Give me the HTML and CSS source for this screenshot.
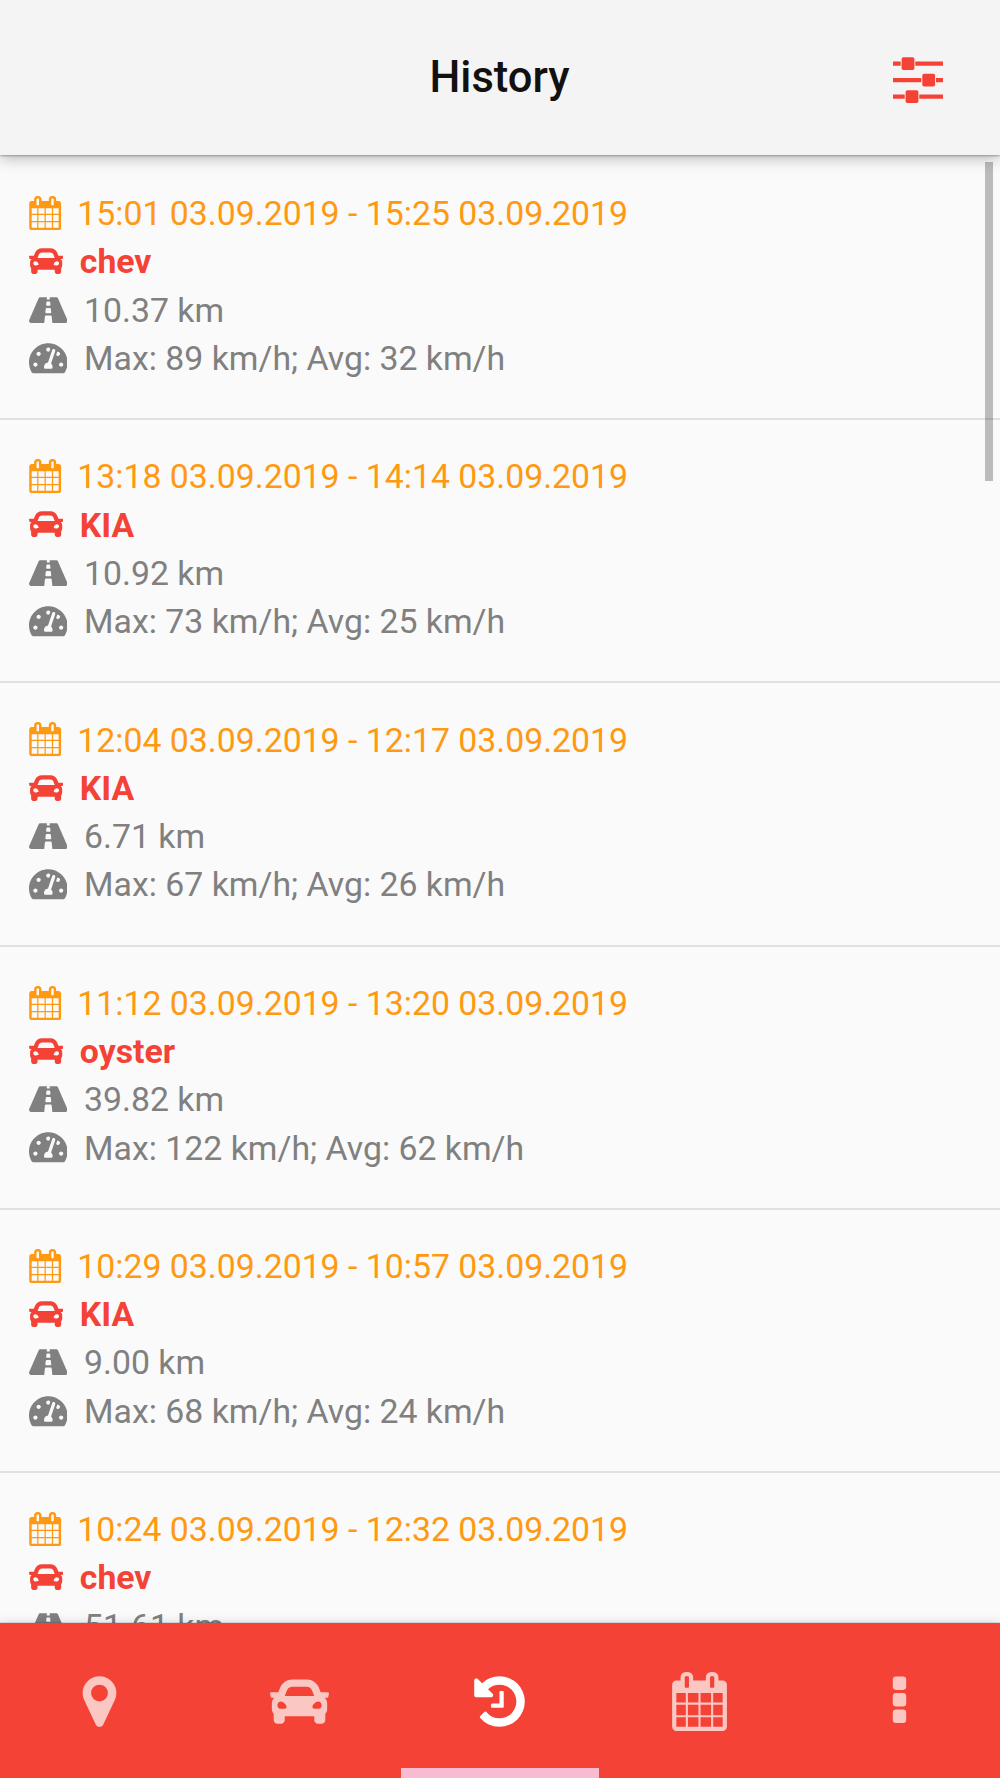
FILE: index.html
```html
<!DOCTYPE html>
<html lang="en">
<head>
  <meta charset="UTF-8">
  <title>History</title>
  <link rel="stylesheet" href="styles.css">
</head>
<body>
  <!-- Icon sprite -->
  <svg class="sprite">
    <symbol id="i-calendar" viewBox="0 0 1792 1792"><path d="M192 1664h288v-288h-288v288zm352 0h320v-288h-320v288zm-352-352h288v-320h-288v320zm352 0h320v-320h-320v320zm-352-384h288v-288h-288v288zm736 736h320v-288h-320v288zm-384-736h320v-288h-320v288zm768 736h288v-288h-288v288zm-384-352h320v-320h-320v320zm-352-864v-288q0-13-9.5-22.5t-22.5-9.5h-64q-13 0-22.5 9.5t-9.5 22.5v288q0 13 9.5 22.5t22.5 9.5h64q13 0 22.5-9.5t9.5-22.5zm736 864h288v-320h-288v320zm-384-384h320v-288h-320v288zm384 0h288v-288h-288v288zm32-480v-288q0-13-9.5-22.5t-22.5-9.5h-64q-13 0-22.5 9.5t-9.5 22.5v288q0 13 9.5 22.5t22.5 9.5h64q13 0 22.5-9.5t9.5-22.5zm384-64v1280q0 52-38 90t-90 38h-1408q-52 0-90-38t-38-90v-1280q0-52 38-90t90-38h128v-96q0-66 47-113t113-47h64q66 0 113 47t47 113v96h384v-96q0-66 47-113t113-47h64q66 0 113 47t47 113v96h128q52 0 90 38t38 90z"/></symbol>
    <symbol id="i-car" viewBox="0 0 512 512"><path d="M499.99 176h-59.87l-16.64-41.6C406.38 91.63 365.57 64 319.5 64h-127c-46.06 0-86.88 27.63-103.99 70.4L71.87 176H12.01C4.2 176-1.53 183.34.37 190.91l6 24C7.7 220.25 12.5 224 18.01 224h20.07C24.65 235.73 16 252.78 16 272v48c0 16.12 6.16 30.67 16 41.93V416c0 17.67 14.33 32 32 32h32c17.67 0 32-14.33 32-32v-32h256v32c0 17.67 14.33 32 32 32h32c17.67 0 32-14.33 32-32v-54.07c9.84-11.25 16-25.8 16-41.93v-48c0-19.22-8.65-36.27-22.07-48H494c5.51 0 10.31-3.75 11.64-9.09l6-24c1.89-7.57-3.84-14.91-11.65-14.91zm-352.06-17.83c7.29-18.22 24.94-30.17 44.57-30.17h127c19.63 0 37.28 11.95 44.57 30.17L384 208H128l19.93-49.83zM96 319.8c-19.2 0-32-12.76-32-31.9S76.8 256 96 256s48 28.71 48 47.85-28.8 15.95-48 15.95zm320 0c-19.2 0-48 3.19-48-15.95S396.8 256 416 256s32 12.76 32 31.9-12.8 31.9-32 31.9z"/></symbol>
    <symbol id="i-road" viewBox="0 0 576 512"><path d="M573.19 402.67l-139.79-320C428.43 71.29 417.6 64 405.68 64h-97.59l2.45 23.16c.5 4.72-3.21 8.84-7.96 8.84h-29.16c-4.75 0-8.46-4.12-7.96-8.84L267.91 64h-97.59c-11.93 0-22.76 7.29-27.73 18.67L2.8 402.67C-6.45 423.86 8.31 448 30.54 448h196.84l10.31-97.68c.86-8.14 7.72-14.32 15.91-14.32h68.8c8.19 0 15.05 6.18 15.91 14.32L348.62 448h196.84c22.23 0 36.99-24.14 27.73-45.33zM260.4 135.16a8 8 0 0 1 7.96-7.16h39.29c4.09 0 7.53 3.09 7.96 7.16l4.6 43.58c.75 7.09-4.81 13.26-11.93 13.26h-40.54c-7.13 0-12.68-6.17-11.93-13.26l4.59-43.58zM315.64 304h-55.29c-9.5 0-16.91-8.23-15.91-17.68l5.07-48c.86-8.14 7.72-14.32 15.91-14.32h45.15c8.19 0 15.05 6.18 15.91 14.32l5.07 48c1 9.45-6.41 17.68-15.91 17.68z"/></symbol>
    <symbol id="i-gauge" viewBox="0 0 576 512"><path d="M288 32C128.94 32 0 160.94 0 320c0 52.8 14.25 102.26 39.06 144.8 5.61 9.62 16.3 15.2 27.44 15.2h443c11.14 0 21.83-5.58 27.44-15.2C561.75 422.26 576 372.8 576 320c0-159.06-128.94-288-288-288zm0 64c14.71 0 26.58 10.13 30.32 23.65-1.11 2.26-2.64 4.23-3.45 6.67l-9.22 27.67c-5.13 3.49-10.97 6.01-17.64 6.01-17.67 0-32-14.33-32-32S270.33 96 288 96zM96 384c-17.67 0-32-14.33-32-32s14.33-32 32-32 32 14.33 32 32-14.33 32-32 32zm48-160c-17.67 0-32-14.33-32-32s14.33-32 32-32 32 14.33 32 32-14.33 32-32 32zm246.77-72.41l-61.33 184C343.13 347.33 352 364.54 352 384c0 11.72-3.38 22.55-8.88 32H232.88c-5.5-9.45-8.88-20.28-8.88-32 0-33.94 26.5-61.43 59.9-63.59l61.34-184.01c4.17-12.56 17.73-19.45 30.36-15.17 12.57 4.19 19.35 17.79 15.17 30.36zm14.66 57.2l15.52-46.55c3.47-1.29 7.13-2.23 11.05-2.23 17.67 0 32 14.33 32 32s-14.33 32-32 32c-11.38-.01-20.89-6.28-26.57-15.22zM480 384c-17.67 0-32-14.33-32-32s14.33-32 32-32 32 14.33 32 32-14.33 32-32 32z"/></symbol>
    <symbol id="i-marker" viewBox="0 0 1792 1792"><path d="M1152 640q0-106-75-181t-181-75-181 75-75 181 75 181 181 75 181-75 75-181zm256 0q0 109-33 179l-364 774q-16 33-47.5 52t-67.5 19-67.5-19-46.5-52l-365-774q-33-70-33-179 0-212 150-362t362-150 362 150 150 362z"/></symbol>
    <symbol id="i-history" viewBox="0 0 1792 1792"><path d="M1664 896q0 156-61 298t-164 245-245 164-298 61q-172 0-327-72.5t-264-204.5q-7-10-6.5-22.5t8.5-20.5l137-138q10-9 25-9 16 2 23 12 73 95 179 147t225 52q104 0 198.5-40.5t163.5-109.5 109.5-163.5 40.5-198.5-40.5-198.5-109.5-163.5-163.5-109.5-198.5-40.5q-98 0-188 35.5t-160 101.5l137 138q31 30 14 69-17 40-59 40h-448q-26 0-45-19t-19-45v-448q0-42 40-59 39-17 69 14l130 129q107-101 244.5-156.5t284.5-55.5q156 0 298 61t245 164 164 245 61 298zm-640-288v448q0 14-9 23t-23 9h-320q-14 0-23-9t-9-23v-64q0-14 9-23t23-9h224v-352q0-14 9-23t23-9h64q14 0 23 9t9 23z"/></symbol>
  </svg>

  <div id="app">
    <header class="header">
      <span></span>
      <h1>History</h1>
      <svg class="filter-btn" viewBox="0 0 50 46">
        <path d="M0 4.6h7.7v4.2H0zM22.3 4.6H50v4.2H22.3zM0 21.1h28.3v4.2H0zM43 21.1h7v4.2h-7zM0 37.6h11.7v4.2H0zM26.3 37.6H50v4.2H26.3z"/>
        <rect x="8.6" y="0.2" width="12.8" height="12.8" rx="1.8"/>
        <rect x="29.3" y="16.7" width="12.8" height="12.8" rx="1.8"/>
        <rect x="12.6" y="33.2" width="12.8" height="12.8" rx="1.8"/>
      </svg>
    </header>

    <main class="list">
      <div class="trip">
        <div class="line date"><svg><use href="#i-calendar"/></svg>15:01 03.09.2019 - 15:25 03.09.2019</div>
        <div class="line car"><svg><use href="#i-car"/></svg>chev</div>
        <div class="line info"><svg><use href="#i-road"/></svg>10.37 km</div>
        <div class="line info"><svg><use href="#i-gauge"/></svg>Max: 89 km/h; Avg: 32 km/h</div>
      </div>
      <div class="trip">
        <div class="line date"><svg><use href="#i-calendar"/></svg>13:18 03.09.2019 - 14:14 03.09.2019</div>
        <div class="line car"><svg><use href="#i-car"/></svg>KIA</div>
        <div class="line info"><svg><use href="#i-road"/></svg>10.92 km</div>
        <div class="line info"><svg><use href="#i-gauge"/></svg>Max: 73 km/h; Avg: 25 km/h</div>
      </div>
      <div class="trip">
        <div class="line date"><svg><use href="#i-calendar"/></svg>12:04 03.09.2019 - 12:17 03.09.2019</div>
        <div class="line car"><svg><use href="#i-car"/></svg>KIA</div>
        <div class="line info"><svg><use href="#i-road"/></svg>6.71 km</div>
        <div class="line info"><svg><use href="#i-gauge"/></svg>Max: 67 km/h; Avg: 26 km/h</div>
      </div>
      <div class="trip">
        <div class="line date"><svg><use href="#i-calendar"/></svg>11:12 03.09.2019 - 13:20 03.09.2019</div>
        <div class="line car"><svg><use href="#i-car"/></svg>oyster</div>
        <div class="line info"><svg><use href="#i-road"/></svg>39.82 km</div>
        <div class="line info"><svg><use href="#i-gauge"/></svg>Max: 122 km/h; Avg: 62 km/h</div>
      </div>
      <div class="trip">
        <div class="line date"><svg><use href="#i-calendar"/></svg>10:29 03.09.2019 - 10:57 03.09.2019</div>
        <div class="line car"><svg><use href="#i-car"/></svg>KIA</div>
        <div class="line info"><svg><use href="#i-road"/></svg>9.00 km</div>
        <div class="line info"><svg><use href="#i-gauge"/></svg>Max: 68 km/h; Avg: 24 km/h</div>
      </div>
      <div class="trip">
        <div class="line date"><svg><use href="#i-calendar"/></svg>10:24 03.09.2019 - 12:32 03.09.2019</div>
        <div class="line car"><svg><use href="#i-car"/></svg>chev</div>
        <div class="line info"><svg><use href="#i-road"/></svg>51.61 km</div>
      </div>
      <div class="scrollbar"></div>
    </main>

    <nav class="tabs">
      <div class="tab"><svg><use href="#i-marker"/></svg></div>
      <div class="tab"><svg><use href="#i-car"/></svg></div>
      <div class="tab active"><svg><use href="#i-history"/></svg></div>
      <div class="tab"><svg><use href="#i-calendar"/></svg></div>
      <div class="tab">
        <svg viewBox="0 0 59 59">
          <rect x="22.8" y="4.5" width="13.4" height="13.4" rx="3.3"/>
          <rect x="22.8" y="21.1" width="13.4" height="13.4" rx="3.3"/>
          <rect x="22.8" y="37.6" width="13.4" height="13.4" rx="3.3"/>
        </svg>
      </div>
    </nav>
  </div>
</body>
</html>
```
FILE: styles.css
```css
body {
  margin: 0;
  background: #fafafa;
  font-family: Roboto, sans-serif;
}
.sprite {
  display: none;
}
#app {
  height: 1778px;
  display: flex;
  flex-direction: column;
  overflow: hidden;
}
.header {
  height: 155px;
  flex: none;
  box-sizing: border-box;
  padding: 0 57.5px 0 56.5px;
  background: #f4f4f4;
  display: grid;
  grid-template-columns: 1fr auto 1fr;
  align-items: center;
  z-index: 1;
  box-shadow: 0 1px 2px rgba(0,0,0,0.3), 0 4px 14px rgba(0,0,0,0.24);
}
.header h1 {
  margin: 0;
  font-size: 43.5px;
  font-weight: 500;
  color: #111;
}
.filter-btn {
  width: 50px;
  height: 46px;
  margin-top: 5px;
  justify-self: end;
  fill: #f44336;
}
.list {
  flex: 1;
  min-height: 0;
  overflow: hidden;
  position: relative;
  padding-top: 2px;
}
.trip {
  height: 263.2px;
  box-sizing: border-box;
  padding: 32px 28.5px 0;
  border-bottom: 2px solid #e0e0e0;
}
.line {
  height: 48.3px;
  padding-top: 1px;
  box-sizing: border-box;
  display: flex;
  align-items: center;
  font-size: 33.8px;
  white-space: nowrap;
}
.line svg {
  width: 34.3px;
  height: 34.3px;
  margin-right: 17px;
  margin-bottom: 1px;
  fill: currentColor;
}
.date {
  color: #ff9912;
}
.date svg {
  margin-left: -1px;
  margin-right: 15.5px;
}
.car {
  color: #f44336;
  font-weight: 700;
}
.info {
  color: #808080;
}
.info svg {
  width: 38.6px;
}
/* thumb floats over the rows */
.scrollbar {
  position: absolute;
  top: 7px;
  right: 7px;
  width: 8px;
  height: 319px;
  background: rgba(0,0,0,0.25);
}
.tabs {
  height: 154.7px;
  flex: none;
  display: flex;
  background: #f44336;
  z-index: 1;
  box-shadow: 0 0 1px rgba(0,0,0,0.6), 0 0 10px rgba(0,0,0,0.15);
}
.tab {
  flex: 1;
  display: flex;
  align-items: center;
  justify-content: center;
  position: relative;
}
.tab svg {
  width: 59px;
  height: 59px;
  margin: 1px 1px 0 0;
  fill: #fff;
  opacity: 0.7;
}
.tab.active svg {
  opacity: 1;
}
.tab.active::after {
  content: "";
  position: absolute;
  left: 1px;
  right: 1px;
  bottom: 0;
  height: 10px;
  background: #f8bbd0;
}
```
